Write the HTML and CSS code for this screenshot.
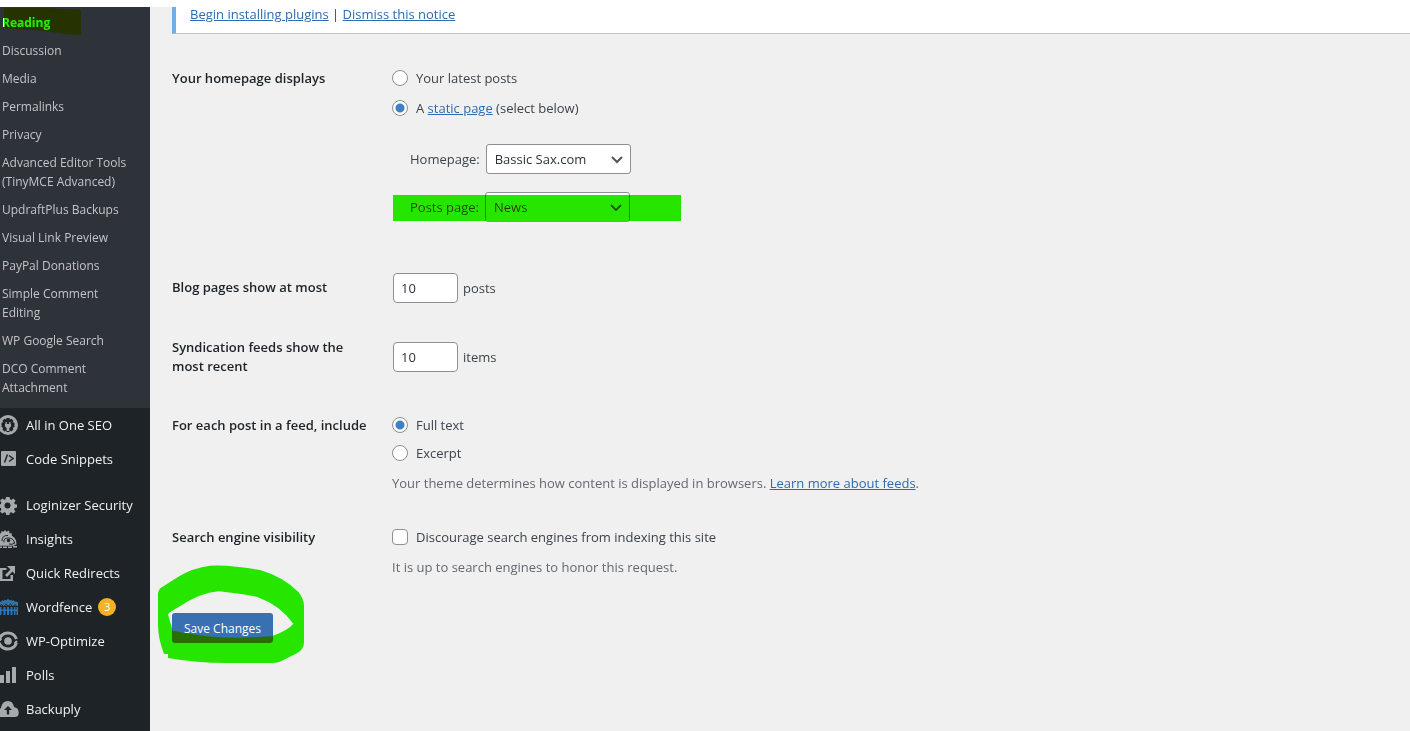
FILE: index.html
```html
<!DOCTYPE html>
<html lang="en">
<head>
    <meta charset="UTF-8">
    <meta name="viewport" content="width=device-width, initial-scale=1.0">
    <title>Reading Settings</title>
    <link rel="stylesheet" href="styles.css">
</head>
<body>
    <div class="wrap">
        <nav class="sidebar">
            <ul class="submenu">
                <li class="current">
                    <a href="#">Reading</a>
                    <svg class="marker" viewBox="0 0 77 28"><path d="M0 0H42L77 2V27L60 26L40 23L0 20Z"/></svg>
                </li>
                <li><a href="#">Discussion</a></li>
                <li><a href="#">Media</a></li>
                <li><a href="#">Permalinks</a></li>
                <li><a href="#">Privacy</a></li>
                <li><a href="#">Advanced Editor Tools (TinyMCE Advanced)</a></li>
                <li><a href="#">UpdraftPlus Backups</a></li>
                <li><a href="#">Visual Link Preview</a></li>
                <li><a href="#">PayPal Donations</a></li>
                <li><a href="#">Simple Comment Editing</a></li>
                <li><a href="#">WP Google Search</a></li>
                <li><a href="#">DCO Comment Attachment</a></li>
            </ul>
            <ul class="menu">
                <li><a href="#">
                    <svg viewBox="0 0 20 20"><circle cx="8" cy="10" r="10"/><path class="hole" d="M6.500 3h3l.4 1.500 1.600-.8 2 2-.9 1.500 1.900.6v4.400l-1.900.6.9 1.600-2.100 2-1.500-.9-.4 1.500h-3l-.5-1.500-1.500.9-2.100-2 .9-1.600-1.800-.6V7.800l1.800-.6-.9-1.500 2-2 1.600.8z"/><path d="M5.500 7h1.300v2h2.400V7h1.300v2h.5v2.500L9.300 13v3H6.700v-3L5 11.500V9h.5z"/></svg>
                    All in One SEO</a></li>
                <li><a href="#">
                    <svg viewBox="0 0 20 20"><rect x="1" y="2" width="15" height="15" rx="1"/><path class="cut slim" d="M7.500 5.500L4.500 13.500M9 6.500l4 3-4 3"/></svg>
                    Code Snippets</a></li>
                <li class="separator"></li>
                <li><a href="#">
                    <svg viewBox="0 0 20 20"><path d="M6 2h3.500l.5 2.300 1.300.6 2-1.400 2.300 2.300-1.400 2 .5 1.400 2.300.4v3l-2.300.4-.6 1.400 1.400 2-2.300 2.200-2-1.300-1.300.5-.5 2.200H6.200l-.5-2.200-1.400-.6-2 1.400L0 16.400l1.400-2-.6-1.400-2-.4v-3l2-.4.6-1.400-1.400-2L2.300 3.500l2 1.300L5.600 4.200z"/><circle class="hole" cx="7.500" cy="10.500" r="3"/></svg>
                    Loginizer Security</a></li>
                <li><a href="#">
                    <svg viewBox="0 0 20 20"><path d="M-1 4l2 .5L1.500 2l2 .8L5 1l1.500 1.800L9 1.500l.6 2.800 2.400.2-.3 2.300 2.300 1.500 2 3 .5 4-3 1.500H-1z"/><path class="cut thin" d="M2 12q0-6 6-5.500M4 13.500q-1-4.500 4.500-4.500 5 0 6 5M9 15q3 1 6-1"/><circle class="hole" cx="8.500" cy="11.500" r="1.800"/><path d="M0 17.500h2V19H0zM3 17.500h4V19H3zM8 17.500h4V19H8zM13 17h4v1.500h-4z"/></svg>
                    Insights</a></li>
                <li><a href="#">
                    <svg viewBox="0 0 20 20"><path d="M7 3h8v8l-2.500-2.500-5.500 5.500-2-2 5.500-5.500z"/><path d="M0 5h6.500v2H2.500v9h8v-4h2.500V18H0z"/></svg>
                    Quick Redirects</a></li>
                <li><a href="#">
                    <svg class="blue" viewBox="0 0 20 20"><path d="M-1 5l2.500-.5L2 3l1.500 1L5 2.500 6.500 3.500 8 1.500l1.500 2L11 2.500 12.500 4 14 3l.5 1.500L18 5v4H-1z"/><path d="M0 10h1.500v8H0zM3.500 10h2v8h-2zM7 10h2v8H7zM10.500 10h2v8h-2zM14 10h1.500v8H14zM16.500 10H18v8h-1.500zM0 12.500h18V14H0z"/><path class="cut thin" d="M0 9q2-3 3 0M4.500 9q1.500-4 3 0M9 9q1.500-4 3 0M13.500 9q1.500-3 3 0"/></svg>
                    Wordfence <span class="count">3</span></a></li>
                <li><a href="#">
                    <svg viewBox="0 0 20 20"><circle cx="8" cy="10" r="3.800"/><path class="line thick" d="M-1 8Q2 2 8 2t8.500 6M-1 12q3 6 9 6t8.500-6"/><path class="line" d="M-1 10Q0 9 1.500 7.500M14.500 12.500L17 10"/></svg>
                    WP-Optimize</a></li>
                <li><a href="#">
                    <svg viewBox="0 0 20 20"><path d="M0 10h4v8H0zM6 6h4v12H6zM12 2h4v16h-4z"/></svg>
                    Polls</a></li>
                <li><a href="#">
                    <svg viewBox="0 0 20 20"><path d="M-2 18v-7l3-2Q2 2 8 2q5 0 6 6 5 1 4.700 6 0 4-4 4z"/><path class="hole" d="M8 7l4 4H9.200v4.500H6.800V11H4z"/></svg>
                    Backuply</a></li>
            </ul>
        </nav>

        <main class="content">
            <div class="notice">
                <a href="#">Begin installing plugins</a> | <a href="#">Dismiss this notice</a>
            </div>

            <form>
                <div class="row">
                    <div class="heading">Your homepage displays</div>
                    <div class="field">
                        <div class="option">
                            <input type="radio" name="show" id="latest">
                            <label for="latest">Your latest posts</label>
                        </div>
                        <div class="option spaced">
                            <input type="radio" name="show" id="static" checked>
                            <label for="static">A <a href="#">static page</a> (select below)</label>
                        </div>
                        <ul class="pages">
                            <li>
                                <label for="homepage">Homepage:</label>
                                <span class="select">
                                    <select id="homepage"><option>Bassic Sax.com</option></select>
                                    <svg viewBox="0 0 12 8"><path d="M1 1l5 5 5-5"/></svg>
                                </span>
                            </li>
                            <li>
                                <label for="posts-page">Posts page:</label>
                                <span class="select">
                                    <select id="posts-page"><option>News</option></select>
                                    <svg viewBox="0 0 12 8"><path d="M1 1l5 5 5-5"/></svg>
                                </span>
                                <span class="highlight"></span>
                            </li>
                        </ul>
                    </div>
                </div>
                <div class="row">
                    <label class="heading" for="per-page">Blog pages show at most</label>
                    <div class="field number">
                        <input type="number" id="per-page" value="10"> posts
                    </div>
                </div>
                <div class="row">
                    <label class="heading" for="per-feed">Syndication feeds show the most recent</label>
                    <div class="field number">
                        <input type="number" id="per-feed" value="10"> items
                    </div>
                </div>
                <div class="row">
                    <div class="heading">For each post in a feed, include</div>
                    <div class="field">
                        <div class="option">
                            <input type="radio" name="feed" id="full" checked>
                            <label for="full">Full text</label>
                        </div>
                        <div class="option">
                            <input type="radio" name="feed" id="excerpt">
                            <label for="excerpt">Excerpt</label>
                        </div>
                        <p class="description">Your theme determines how content is displayed in browsers. <a href="#">Learn more about feeds</a>.</p>
                    </div>
                </div>
                <div class="row">
                    <div class="heading">Search engine visibility</div>
                    <div class="field">
                        <div class="option">
                            <input type="checkbox" id="noindex">
                            <label for="noindex">Discourage search engines from indexing this site</label>
                        </div>
                        <p class="description">It is up to search engines to honor this request.</p>
                    </div>
                </div>
                <div class="submit">
                    <button type="button">Save Changes</button>
                    <!-- marker ring around the button -->
                    <svg class="ring" viewBox="0 0 510 360"><path fill-rule="evenodd" d="M24 115Q26 100 38 95L85 65Q130 38 180 32Q235 28 330 45Q400 65 446 112Q460 130 462 150V265Q460 285 442 294L390 320Q380 325 340 324H230Q140 324 54 309V297H42Q24 250 24 210ZM54 178Q60 170 85 157Q150 113 205 109Q240 112 320 125Q390 150 430 206Q415 225 365 244Q290 250 210 247Q130 240 68 227Z"/></svg>
                </div>
            </form>
        </main>
    </div>
</body>
</html>
```

FILE: styles.css
```css
* {
    box-sizing: border-box;
}
body {
    margin: 0;
    padding-top: 7px;
    background: #fff;
    color: #3c434a;
    font-family: "Open Sans", "Noto Sans", sans-serif;
    font-size: 13px;
    line-height: 19px;
}
ul {
    margin: 0;
    padding: 0;
    list-style: none;
}
a {
    color: #2e6bb0;
}
.wrap {
    display: flex;
    min-height: calc(100vh - 7px);
    background: #f0f0f0;
}

/* sidebar */
.sidebar {
    flex: 0 0 150px;
    background: #1d2327;
    overflow: hidden;
}
.sidebar a {
    text-decoration: none;
}
.submenu {
    padding: 1px 0 7px;
    background: #2e3239;
    font-size: 12px;
}
.submenu li {
    position: relative;
}
.submenu a {
    display: block;
    padding: 5px 12px 4px 2px;
    color: #c3c4c7;
}
.submenu .current a {
    color: #fff;
    font-weight: 700;
}
.marker {
    position: absolute;
    left: 4px;
    top: 0;
    width: 77px;
    height: 28px;
    fill: #26e600;
    mix-blend-mode: darken;
}
.menu a {
    display: flex;
    align-items: center;
    height: 34px;
    color: #f0f0f1;
}
.menu svg {
    width: 20px;
    height: 20px;
    margin-right: 6px;
    fill: #a7aaad;
}
.menu .blue {
    fill: #2f74ad;
}
.menu .hole {
    fill: #1d2327;
}
.menu .cut {
    fill: none;
    stroke: #1d2327;
}
.menu .thin {
    stroke-width: 1;
}
.menu .slim {
    stroke-width: 1.5;
}
.menu .line {
    fill: none;
    stroke: #a7aaad;
    stroke-width: 2;
}
.menu .thick {
    stroke-width: 3;
}
.separator {
    height: 12px;
}
.count {
    width: 18px;
    height: 18px;
    margin-left: 6px;
    border-radius: 9px;
    background: #f5b125;
    color: #fff;
    font-size: 11px;
    line-height: 18px;
    text-align: center;
}

/* settings form */
.content {
    flex: 1;
    padding-left: 22px;
}
.notice {
    height: 27px;
    margin-bottom: 15px;
    padding-left: 14px;
    border-left: 4px solid #72aee6;
    border-bottom: 1px solid #c3c4c7;
    background: #fff;
    line-height: 15px;
}
.row {
    display: grid;
    grid-template-columns: 220px 1fr;
    align-items: center;
}
.heading {
    align-self: start;
    padding: 20px 20px 20px 0;
    color: #1d2327;
    font-weight: 600;
}
.field {
    padding: 15px 0;
}
.option {
    display: flex;
    align-items: center;
    height: 28px;
    gap: 8px;
}
.spaced {
    margin-top: 2px;
}
input, select, button {
    margin: 0;
    font: inherit;
}
input[type="radio"], input[type="checkbox"] {
    appearance: none;
    width: 16px;
    height: 16px;
    border: 1px solid #8c8f94;
    border-radius: 4px;
    background: #fff;
}
input[type="radio"] {
    border-radius: 50%;
}
input[type="radio"]:checked {
    background: radial-gradient(circle, #4180c5 4px, #fff 5px);
}
.pages {
    display: flex;
    flex-direction: column;
    gap: 18px;
    margin: 22px 0 21px 18px;
}
.pages li {
    display: flex;
    align-items: center;
    position: relative;
    gap: 6px;
}
.select {
    position: relative;
}
.select svg {
    position: absolute;
    right: 8px;
    top: 12px;
    width: 12px;
    height: 8px;
    fill: none;
    stroke: #50575e;
    stroke-width: 2;
}
select {
    appearance: none;
    display: block;
    width: 145px;
    height: 30px;
    padding: 0 24px 0 8px;
    border: 1px solid #8c8f94;
    border-radius: 3px;
    background: #fff;
    color: #2c3338;
}
.highlight {
    position: absolute;
    left: -17px;
    top: 3px;
    width: 288px;
    height: 26px;
    background: #26e600;
    mix-blend-mode: darken;
    pointer-events: none;
}
.number {
    display: flex;
    align-items: center;
    gap: 5px;
    padding-left: 1px;
}
input[type="number"] {
    appearance: textfield;
    width: 65px;
    height: 30px;
    padding: 0 7px;
    border: 1px solid #8c8f94;
    border-radius: 4px;
    background: #fff;
    color: #2c3338;
}
.description {
    margin: 6px 0 0;
    color: #646970;
    line-height: 20px;
}
.submit {
    position: relative;
    margin-top: 21px;
}
button {
    display: block;
    height: 30px;
    padding: 0 12px;
    border: 0;
    border-radius: 3px;
    background: #3870b2;
    color: #fff;
    font-size: 12px;
}
.ring {
    position: absolute;
    left: -22px;
    top: -58px;
    width: 170px;
    height: 120px;
    fill: #26e600;
    mix-blend-mode: darken;
    pointer-events: none;
}
```
